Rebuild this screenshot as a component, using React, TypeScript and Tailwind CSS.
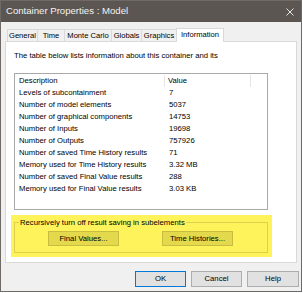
const font = { fontFamily: '"Liberation Sans", Arial, sans-serif' };

const rows: [string, string][] = [
  ["Levels of subcontainment", "7"],
  ["Number of model elements", "5037"],
  ["Number of graphical components", "14753"],
  ["Number of Inputs", "19698"],
  ["Number of Outputs", "757926"],
  ["Number of saved Time History results", "71"],
  ["Memory used for Time History results", "3.32 MB"],
  ["Number of saved Final Value results", "288"],
  ["Memory used for Final Value results", "3.03 KB"],
];

const tabs = ["General", "Time", "Monte Carlo", "Globals", "Graphics"];
const tabWidths = ["w-[31px]", "w-[28px]", "w-[48px]", "w-[31px]", "w-[36px]"];

export default function App() {
  return (
    <div className="w-[303px] h-[293px] bg-white text-black" style={font}>
      <div className="w-[302px] h-[292px] flex flex-col border border-[#6f6a65] bg-[#f0f0f0]">
        {/* title bar */}
        <div className="h-[21px] flex items-center justify-between bg-[#5b5651] pl-[5px] pr-[7px]">
          <span className="text-[9.6px] text-[#f4f2f0]">Container Properties : Model</span>
          <svg width="8" height="8" viewBox="0 0 8 8" className="mt-[1px]">
            <path d="M0.5 0.5 L7.5 7.5 M7.5 0.5 L0.5 7.5" stroke="#e8e6e3" strokeWidth="1" />
          </svg>
        </div>

        {/* tabs */}
        <div className="mt-[5px] ml-[6px] h-[14px] flex items-end text-[7.6px]">
          {tabs.map((t, i) => (
            <div
              key={t}
              className={`${tabWidths[i]} h-[12px] flex items-center justify-center border border-b-0 border-[#d9d9d9] -ml-[1px] first:ml-0 bg-[#f0f0f0]`}
            >
              {t}
            </div>
          ))}
          <div className="w-[48px] h-[14px] flex items-center justify-center border border-b-0 border-[#d9d9d9] -ml-[1px] bg-white relative z-10 -mb-[1px] pb-[1px]">
            Information
          </div>
        </div>

        {/* panel */}
        <div className="ml-[4px] w-[292px] h-[222px] bg-white border border-[#d9d9d9] flex flex-col">
          <div className="mt-[8px] ml-[8px] h-[12px] leading-[12px] text-[7.7px]">
            The table below lists information about this container and its
          </div>

          <div className="mt-[11px] ml-[8px] w-[254px] h-[137px] border border-[#a9a9a9] pt-[1px] text-[7.7px]">
            <div className="h-[12px] flex items-center">
              <div className="w-[150px] pl-[4px] h-full flex items-center border-r border-[#e5e5e5]">Description</div>
              <div className="w-[86px] pl-[3px] h-full flex items-center border-r border-[#e5e5e5]">Value</div>
            </div>
            {rows.map(([d, v]) => (
              <div key={d} className="h-[12px] flex items-center">
                <div className="w-[151px] pl-[4px]">{d}</div>
                <div className="pl-[3px]">{v}</div>
              </div>
            ))}
          </div>

          {/* highlighted group */}
          <div className="mt-[5px] ml-[5px] w-[261px] h-[42px] bg-[#fff35c] pt-[7px] pl-[3px] pr-[4px] pb-[4px]">
            <div className="relative h-full border border-[#ddd04c] flex items-start pt-[8px] pl-[33px] gap-[43px] text-[7.7px]">
              <span className="absolute -top-[6px] left-[4px] bg-[#fff35c] px-[1px] leading-[12px]">
                Recursively turn off result saving in subelements
              </span>
              <button className="w-[71px] h-[15px] bg-[#e4d94c] border border-[#c9bd3f] flex items-center justify-center">
                Final Values...
              </button>
              <button className="w-[71px] h-[15px] bg-[#e4d94c] border border-[#c9bd3f] flex items-center justify-center">
                Time Histories...
              </button>
            </div>
          </div>
        </div>

        {/* footer buttons */}
        <div className="mt-[8px] flex justify-end pr-[2px] gap-[5px] text-[7.7px]">
          <button className="w-[51px] h-[16px] bg-[#e1e1e1] border border-[#0078d7] flex items-center justify-center">OK</button>
          <button className="w-[51px] h-[16px] bg-[#e1e1e1] border border-[#adadad] flex items-center justify-center">Cancel</button>
          <button className="w-[52px] h-[16px] bg-[#e1e1e1] border border-[#adadad] flex items-center justify-center">Help</button>
        </div>
      </div>
    </div>
  );
}
